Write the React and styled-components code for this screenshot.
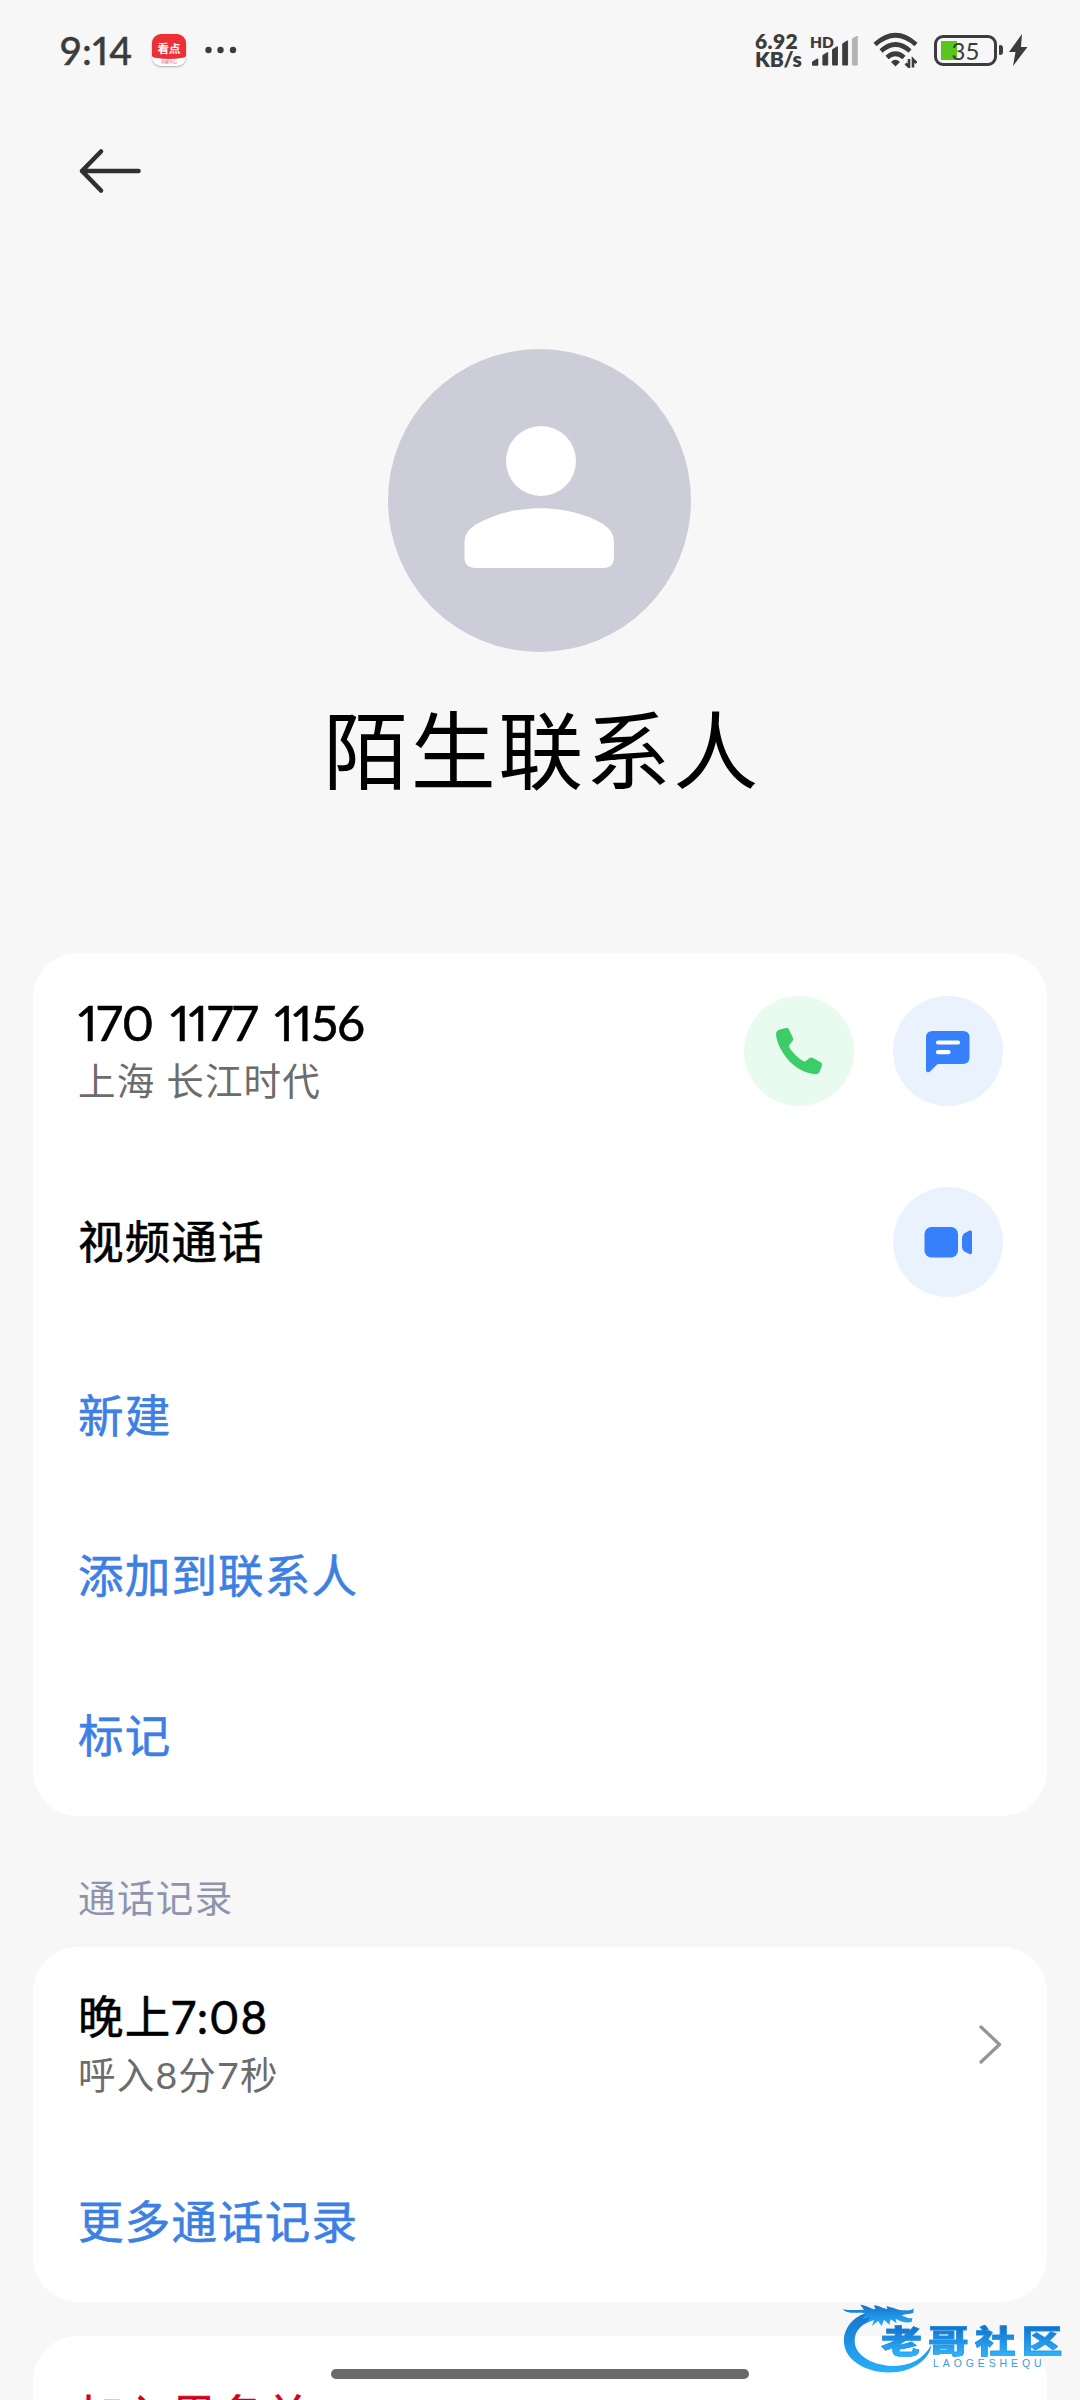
import React from 'react';
import styled, { createGlobalStyle } from 'styled-components';

const GlobalStyle = createGlobalStyle`
  * {
    box-sizing: border-box;
  }

  body {
    margin: 0;
    background: #f7f7f7;
    font-family: Lato, 'Noto Sans CJK SC', sans-serif;
  }
`;

const Screen = styled.div`
  position: relative;
  display: flex;
  flex-direction: column;
  width: 1080px;
  height: 2400px;
  overflow: hidden;
  background: #f7f7f7;
`;

/* 状态栏 */
const StatusBar = styled.header`
  display: flex;
  justify-content: space-between;
  align-items: center;
  flex-shrink: 0;
  height: 100px;
  padding: 0 52px 0 60px;
  color: #3c3c3c;
`;

const StatusGroup = styled.div`
  display: flex;
  align-items: center;
`;

const Clock = styled.span`
  width: 92px;
  font-size: 39px;
  font-weight: 500;
  line-height: 40px;
  letter-spacing: 0.7px;
  font-variant-numeric: proportional-nums;
  white-space: nowrap;
  -webkit-text-stroke: 0.4px #3c3c3c;
`;

const AppBadge = styled.div`
  display: flex;
  flex-direction: column;
  width: 34px;
  height: 32px;
  margin-right: 19px;
  overflow: hidden;
  border-radius: 9px;
  background: #fff;
  box-shadow: 0 1px 2px rgba(0, 0, 0, 0.3);
  text-align: center;

  .badgeTitle {
    height: 25px;
    background: #ee2f35;
    border-radius: 0 0 50% 50% / 0 0 3px 3px;
    color: #fff;
    font-size: 11.5px;
    font-weight: 700;
    line-height: 29px;
  }

  .badgeDesc {
    color: #e0474c;
    font-size: 4px;
    line-height: 7px;
  }
`;

const NetSpeed = styled.div`
  display: flex;
  flex-direction: column;
  width: 55px;
  font-size: 21px;
  font-weight: 800;
  line-height: 18.5px;
  letter-spacing: 0.4px;
  white-space: nowrap;

  .unit {
    letter-spacing: -0.2px;
  }
`;

const Signal = styled.div`
  display: flex;
  flex-direction: column;
  width: 63px;
  height: 32px;
  font-size: 15.5px;
  font-weight: 800;
  line-height: 16px;

  svg {
    margin-top: -14px;
  }
`;

const Battery = styled.div`
  display: flex;
  justify-content: center;
  align-items: center;
  width: 63px;
  height: 31px;
  margin-left: 15px;
  border: 3px solid #3c3c3c;
  border-radius: 9px;
  background: linear-gradient(#5ac51c, #5ac51c) 4px 3px / 16px 19px no-repeat;
  font-size: 24px;
  line-height: 25px;
`;

const BatteryTip = styled.div`
  width: 4px;
  height: 10px;
  margin: 0 5px 0 2px;
  border-radius: 1px 3px 3px 1px;
  background: #3c3c3c;
`;

/* 顶部导航 */
const NavBar = styled.nav`
  display: flex;
  flex-shrink: 0;
  height: 249px;
  padding: 48px 77px;
`;

const Profile = styled.section`
  display: flex;
  flex-direction: column;
  align-items: center;
  flex-shrink: 0;
  height: 604px;
  padding-right: 1px;

  h1 {
    margin: 33px 0 0;
    padding-left: 5px;
    color: #000;
    font-size: 85px;
    font-weight: 400;
    line-height: 130px;
    letter-spacing: 2.5px;
  }
`;

const Card = styled.section`
  flex-shrink: 0;
  margin: 0 33px;
  border-radius: 45px;
  background: #fff;
`;

const Row = styled.div`
  display: flex;
  justify-content: space-between;
  align-items: center;
  height: ${({ $height }) => $height || 160}px;
  padding: 0 44px 0 45px;
`;

const Label = styled.span`
  display: block;
  color: ${({ $color }) => $color || '#000'};
  font-size: 45.5px;
  font-weight: 400;
  line-height: 60px;
  letter-spacing: 1.2px;
  font-variant-numeric: proportional-nums;
  white-space: nowrap;
  -webkit-text-stroke: 0.6px ${({ $color }) => $color || '#000'};
`;

const PhoneNumber = styled(Label)`
  font-size: 49px;
  line-height: 61px;
  letter-spacing: -0.8px;
  word-spacing: 5px;
`;

const SubText = styled.span`
  display: block;
  color: #6c6c6c;
  font-size: 37.5px;
  font-weight: 400;
  line-height: 56px;
  letter-spacing: 1.2px;
  white-space: nowrap;
`;

const SectionTitle = styled.h2`
  flex-shrink: 0;
  height: 131px;
  margin: 0;
  padding: 54px 78px 0;
  color: #8f94ae;
  font-size: 37.5px;
  font-weight: 400;
  line-height: 56px;
  letter-spacing: 1.4px;
`;

const Actions = styled.div`
  display: flex;
  gap: 39px;
`;

const RoundButton = styled.button`
  display: flex;
  justify-content: center;
  align-items: center;
  width: 110px;
  height: 110px;
  padding: 0;
  border: 0;
  border-radius: 50%;
  background: ${({ $bg }) => $bg};
`;

const Gap = styled.div`
  flex-shrink: 0;
  height: 34px;
`;

const HomeBar = styled.div`
  position: absolute;
  left: 331px;
  bottom: 21px;
  width: 418px;
  height: 10px;
  border-radius: 5px;
  background: #6a6a6a;
`;

/* 右下角水印 */
const Watermark = styled.div`
  position: absolute;
  left: 840px;
  top: 2300px;
  width: 230px;
  height: 80px;

  svg {
    position: absolute;
    left: 0;
    top: 0;
  }

  .brand {
    position: absolute;
    left: 41px;
    top: 25px;
    background: linear-gradient(#1474cf 10%, #2cb0fa 90%);
    background-clip: text;
    color: transparent;
    font-size: 32px;
    font-weight: 900;
    line-height: 32px;
    letter-spacing: 4.6px;
    transform: scaleX(1.28);
    transform-origin: left;
    white-space: nowrap;
    -webkit-text-stroke: 0.5px #1c8fe4;
  }

  .pinyin {
    position: absolute;
    left: 93px;
    top: 58px;
    color: #3d9ae2;
    font-family: 'Liberation Sans', sans-serif;
    font-size: 10.5px;
    font-weight: 400;
    line-height: 10px;
    letter-spacing: 3.9px;
  }
`;

const BLUE = '#3d80e4';

const SignalBars = () => (
  <svg width="50" height="31" viewBox="0 0 50 31" fill="#3c3c3c">
    <path d="M2 27l5-3v6H2z" stroke="#3c3c3c" strokeWidth="1.5" strokeLinejoin="round" />
    <path d="M12.500 20l5-3v13h-5z" stroke="#3c3c3c" strokeLinejoin="round" />
    <path d="M22.500 14l5-3v19h-5z" stroke="#3c3c3c" strokeLinejoin="round" />
    <path d="M33 8l5-3v25h-5z" stroke="#3c3c3c" strokeLinejoin="round" />
    <path d="M43 3l5-3v30h-5z" fill="#b3b3b3" stroke="#b3b3b3" strokeLinejoin="round" />
  </svg>
);

const WifiIcon = () => (
  <svg width="46" height="36" viewBox="0 0 46 36" fill="none" stroke="#3c3c3c">
    <path d="M2 12.500Q22.500 -6 43 12.500" strokeWidth="4.600" />
    <path d="M8 19Q22.500 6 37 19" strokeWidth="4.600" />
    <path d="M14 25.500Q22.500 18 31 25.500" strokeWidth="4.600" />
    <path d="M18 30Q22.500 25.500 27 30L22.500 34.500z" fill="#3c3c3c" stroke="none" />
    <path d="M36 27v8l-3.500-3.500M40 35.500v-8l3.500 3.500" strokeWidth="2.600" />
  </svg>
);

const DragonLogo = () => (
  <svg width="94" height="76" viewBox="360 92 282 228">
    <defs>
      <linearGradient id="dragon" x1="0" y1="0" x2="0" y2="1">
        <stop offset="0" stopColor="#1673ca" />
        <stop offset="1" stopColor="#27b0fb" />
      </linearGradient>
    </defs>
    <g fill="url(#dragon)">
      <path d="M438 130C390 148 368 185 372 222C378 280 450 314 520 309C590 303 632 262 634 226C610 270 570 290 515 290C450 286 402 255 404 212C406 182 425 163 465 150Z" />
      <path d="M367 119C385 125 408 121 432 121L421 106C440 108 450 118 466 120L462 108C480 110 488 118 502 119L500 110C520 115 535 123 553 123C565 124 577 123 581 117L580 130C568 135 556 133 545 138C558 145 568 149 577 145L575 158C558 162 540 156 527 148L530 162L512 150L508 166L492 151L485 170L474 155L456 170L462 152L440 160L450 144L425 150L440 132C412 129 382 136 367 119Z" />
    </g>
  </svg>
);

const CallIcon = () => (
  <svg width="110" height="110" viewBox="0 0 110 110" fill="#3ccd68">
    <path d="M36 33.500L42 32Q44 31.600 45 33.400L49 42Q49.600 43.600 48.500 45L45 49.500Q45 51 47 54Q53 61.500 59 65Q61 66 62.500 64.500L65.500 62Q67 61 69 62L77 66.500Q78.700 67.700 78 69.500L75.500 76Q74.500 78.500 71 78.300C60 77 50 71 43.500 63C36.500 54 32.500 46 32 38Q32 34.500 36 33.500Z" />
  </svg>
);

const MessageIcon = () => (
  <svg width="110" height="110" viewBox="0 0 110 110">
    <path d="M39.500 35h30.500q6.500 0 6.500 6.500v20q0 6.500-6.500 6.500H45.500q-1 0-2 1L37 75.500q-1.500 1.300-3 .5-1-.5-1-2V41.500Q33 35 39.500 35z" fill="#3680fb" />
    <path d="M45 46.500h20M45 56.200h10.500" stroke="#fff" strokeWidth="4.200" strokeLinecap="round" />
  </svg>
);

const VideoIcon = () => (
  <svg width="110" height="110" viewBox="0 0 110 110" fill="#3680fb">
    <rect x="31.500" y="40" width="33.500" height="30.500" rx="7" />
    <path d="M69 51q0-3 2.500-4.700l5-2.700q2.500-.8 2.500 1.500v20.500q0 2.300-2.500 1.500l-5-2.700Q69 63 69 60z" />
  </svg>
);

const App = () => {
  return (
    <Screen>
      <GlobalStyle />

      <StatusBar>
        <StatusGroup>
          <Clock>9:14</Clock>
          <AppBadge>
            <div className="badgeTitle">看点</div>
            <div className="badgeDesc">内容中心</div>
          </AppBadge>
          <svg width="32" height="8" fill="#3c3c3c">
            <circle cx="3.500" cy="4" r="3.200" />
            <circle cx="15.500" cy="4" r="3.200" />
            <circle cx="28" cy="4" r="3.200" />
          </svg>
        </StatusGroup>
        <StatusGroup>
          <NetSpeed>
            <span>6.92</span>
            <span className="unit">KB/s</span>
          </NetSpeed>
          <Signal>
            HD
            <SignalBars />
          </Signal>
          <WifiIcon />
          <Battery>35</Battery>
          <BatteryTip />
          <svg width="20" height="34" viewBox="0 0 20 34">
            <path d="M14 1L1 19h6.500L5 33 19.500 14H13z" fill="#3c3c3c" />
          </svg>
        </StatusGroup>
      </StatusBar>

      <NavBar>
        <svg width="66" height="46" fill="none" stroke="#303030" strokeWidth="4.600" strokeLinecap="round" strokeLinejoin="round">
          <path d="M24 3.500L5 23l19 19.500M5 23h56.500" />
        </svg>
      </NavBar>

      <Profile>
        <svg width="303" height="303" viewBox="0 0 303 303">
          <circle cx="151.500" cy="151.500" r="151.500" fill="#cccdd9" />
          <circle cx="153" cy="112" r="35" fill="#fff" />
          <path
            d="M76.500 192Q77 182 88 175.500C125 154 179 154 215 175Q225.500 182 226 192V208Q226 219 215 219H88Q76.500 219 76.500 208Z"
            fill="#fff"
          />
        </svg>
        <h1>陌生联系人</h1>
      </Profile>

      <Card>
        <Row $height={195}>
          <div>
            <PhoneNumber>170 1177 1156</PhoneNumber>
            <SubText>上海 长江时代</SubText>
          </div>
          <Actions>
            <RoundButton $bg="#e9faef">
              <CallIcon />
            </RoundButton>
            <RoundButton $bg="#eaf2fe">
              <MessageIcon />
            </RoundButton>
          </Actions>
        </Row>
        <Row $height={188}>
          <Label>视频通话</Label>
          <RoundButton $bg="#eaf2fe">
            <VideoIcon />
          </RoundButton>
        </Row>
        {['新建', '添加到联系人', '标记'].map((v) => (
          <Row key={v}>
            <Label $color={BLUE}>{v}</Label>
          </Row>
        ))}
      </Card>

      <SectionTitle>通话记录</SectionTitle>

      <Card>
        <Row $height={195}>
          <div>
            <Label>晚上7:08</Label>
            <SubText>呼入8分7秒</SubText>
          </div>
          <svg width="26" height="42" fill="none" stroke="#969696" strokeWidth="3.300" strokeLinecap="round" strokeLinejoin="round">
            <path d="M4 3l18.500 17.500L4 38" />
          </svg>
        </Row>
        <Row>
          <Label $color={BLUE}>更多通话记录</Label>
        </Row>
      </Card>

      <Gap />

      <Card>
        <Row>
          <Label $color="#d0021b">加入黑名单</Label>
        </Row>
      </Card>

      <HomeBar />

      <Watermark>
        <DragonLogo />
        <span className="brand">老哥社区</span>
        <span className="pinyin">LAOGESHEQU</span>
      </Watermark>
    </Screen>
  );
};

export default App;
